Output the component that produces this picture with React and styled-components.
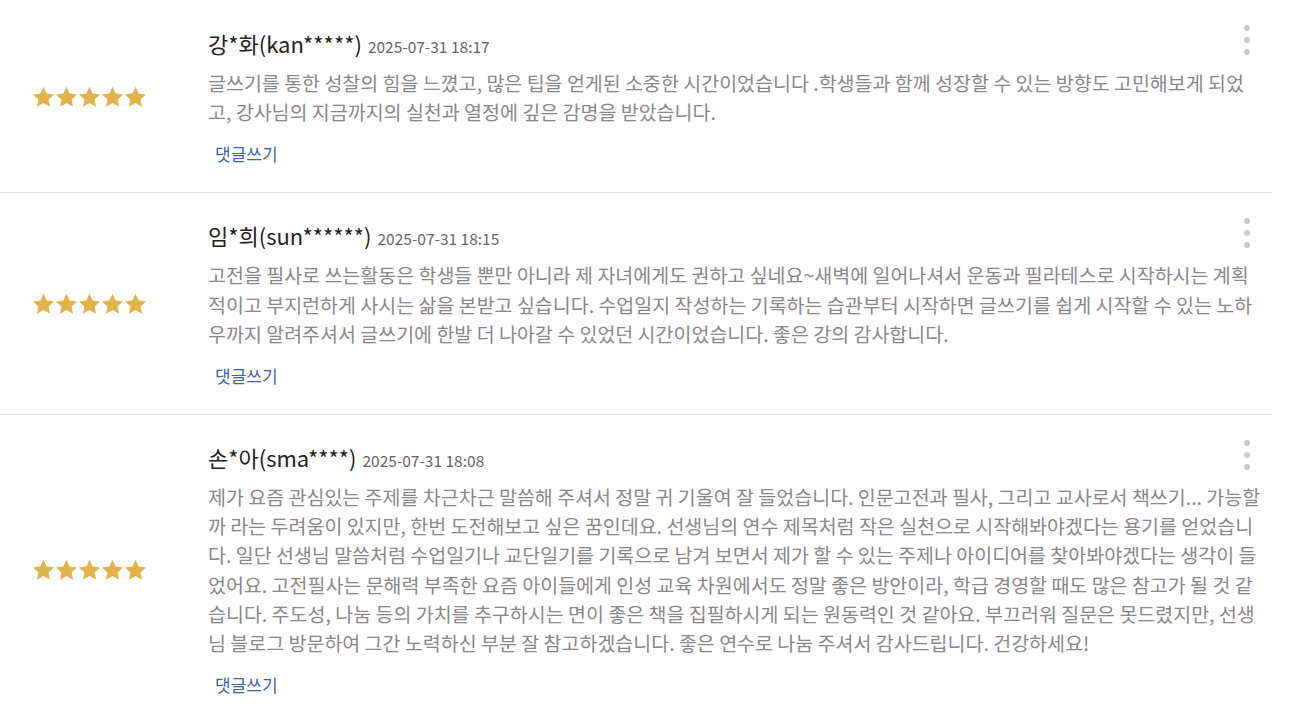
import React from 'react'
import styled, { createGlobalStyle } from 'styled-components'

const GlobalStyle = createGlobalStyle`
  body {
    margin: 0;
    background: #fff;
    font-family: "Noto Sans CJK KR", "Noto Sans", sans-serif;
  }
`;

const List = styled.ul`
  list-style: none;
  margin: 0;
  padding: 0;
  width: 1272px;
`;

const Row = styled.li`
  position: relative;
  display: flex;
  align-items: center;
  padding: 27px 0 26px;
  border-bottom: 1px solid #ddd;

  &:first-child {
    padding-top: 28px;
  }
  &:last-child {
    border-bottom: none;
  }
`;

const StarCol = styled.div`
  flex: 0 0 178px;
  display: flex;
  justify-content: center;
`;

const Body = styled.div`
  flex: 1;
  padding-left: 30px;
  padding-right: 10px;
`;

const Head = styled.div`
  display: flex;
  align-items: baseline;
  gap: 6px;
  line-height: 30px;
`;

const Name = styled.span`
  font-size: 22px;
  color: #222;
`;

const Date = styled.span`
  font-size: 15.5px;
  color: #666;
`;

const Comment = styled.p`
  margin: 7px 0 0;
  font-family: "Noto Sans CJK KR", sans-serif;
  font-size: 19.5px;
  line-height: 29.2px;
  color: #888;
`;

const Reply = styled.a`
  display: inline-block;
  margin: 18px 0 0 7px;
  font-size: 17px;
  line-height: 20px;
  color: #3b64a6;
  text-decoration: none;
  cursor: pointer;
`;

const Kebab = styled.button`
  position: absolute;
  top: 25px;
  right: 22px;
  display: flex;
  flex-direction: column;
  gap: 6px;
  padding: 0;
  border: none;
  background: none;

  span {
    width: 6px;
    height: 6px;
    border-radius: 50%;
    background: #ccc;
  }
`;

const Star = () => (
  <svg width="23" height="22" viewBox="0 0 24 23">
    <path
      d="M12 0.8l3.3 7.1 7.7.9-5.7 5.3 1.5 7.6L12 17.9l-6.8 3.8 1.5-7.6L1 8.8l7.7-.9z"
      fill="#e3b24a"
    />
  </svg>
);

const reviews = [
  {
    name: '강*화(kan*****)',
    date: '2025-07-31 18:17',
    text: '글쓰기를 통한 성찰의 힘을 느꼈고, 많은 팁을 얻게된 소중한 시간이었습니다 .학생들과 함께 성장할 수 있는 방향도 고민해보게 되었고, 강사님의 지금까지의 실천과 열정에 깊은 감명을 받았습니다.',
  },
  {
    name: '임*희(sun******)',
    date: '2025-07-31 18:15',
    text: '고전을 필사로 쓰는활동은 학생들 뿐만 아니라 제 자녀에게도 권하고 싶네요~새벽에 일어나셔서 운동과 필라테스로 시작하시는 계획적이고 부지런하게 사시는 삶을 본받고 싶습니다. 수업일지 작성하는 기록하는 습관부터 시작하면 글쓰기를 쉽게 시작할 수 있는 노하우까지 알려주셔서 글쓰기에 한발 더 나아갈 수 있었던 시간이었습니다. 좋은 강의 감사합니다.',
  },
  {
    name: '손*아(sma****)',
    date: '2025-07-31 18:08',
    text: '제가 요즘 관심있는 주제를 차근차근 말씀해 주셔서 정말 귀 기울여 잘 들었습니다. 인문고전과 필사, 그리고 교사로서 책쓰기... 가능할까 라는 두려움이 있지만, 한번 도전해보고 싶은 꿈인데요. 선생님의 연수 제목처럼 작은 실천으로 시작해봐야겠다는 용기를 얻었습니다. 일단 선생님 말씀처럼 수업일기나 교단일기를 기록으로 남겨 보면서 제가 할 수 있는 주제나 아이디어를 찾아봐야겠다는 생각이 들었어요. 고전필사는 문해력 부족한 요즘 아이들에게 인성 교육 차원에서도 정말 좋은 방안이라, 학급 경영할 때도 많은 참고가 될 것 같습니다. 주도성, 나눔 등의 가치를 추구하시는 면이 좋은 책을 집필하시게 되는 원동력인 것 같아요. 부끄러워 질문은 못드렸지만, 선생님 블로그 방문하여 그간 노력하신 부분 잘 참고하겠습니다. 좋은 연수로 나눔 주셔서 감사드립니다. 건강하세요!',
  },
];

function App() {
  return (
    <>
      <GlobalStyle />
      <List>
        {reviews.map(r => (
          <Row key={r.name}>
            <StarCol>
              {[0, 1, 2, 3, 4].map(i => <Star key={i} />)}
            </StarCol>
            <Body>
              <Head>
                <Name>{r.name}</Name>
                <Date>{r.date}</Date>
              </Head>
              <Comment>{r.text}</Comment>
              <Reply>댓글쓰기</Reply>
            </Body>
            <Kebab aria-label="더보기">
              <span /><span /><span />
            </Kebab>
          </Row>
        ))}
      </List>
    </>
  )
}

export default App
